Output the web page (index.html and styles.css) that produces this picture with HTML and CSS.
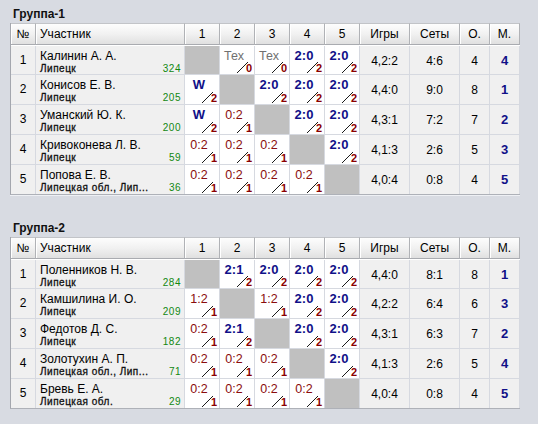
FILE: index.html
```html
<!DOCTYPE html>
<html lang="ru">
<head>
<meta charset="utf-8">
<title>Группы</title>
<link rel="stylesheet" href="styles.css">
</head>
<body>
<div class="page">
  <section class="group">
    <h2 class="title">Группа-1</h2>
    <div class="grid">
      <div class="row head">
        <div class="c n">№</div><div class="c name">Участник</div>
        <div class="c">1</div><div class="c">2</div><div class="c">3</div><div class="c">4</div><div class="c">5</div>
        <div class="c">Игры</div><div class="c">Сеты</div><div class="c">О.</div><div class="c">М.</div>
      </div>
      <div class="body">
        <div class="row">
          <div class="c n">1</div>
          <div class="c name"><div class="fio">Калинин А. А.</div><div class="sub"><span class="city">Липецк</span><span class="rt">324</span></div></div>
          <div class="c sc self"></div>
          <div class="c sc"><span class="res tex">Тех</span><i class="sl"></i><b class="pt">0</b></div>
          <div class="c sc"><span class="res tex">Тех</span><i class="sl"></i><b class="pt">0</b></div>
          <div class="c sc"><span class="res win">2:0</span><i class="sl"></i><b class="pt">2</b></div>
          <div class="c sc"><span class="res win">2:0</span><i class="sl"></i><b class="pt">2</b></div>
          <div class="c st">4,2:2</div><div class="c st">4:6</div><div class="c st">4</div><div class="c pl">4</div>
        </div>
        <div class="row">
          <div class="c n">2</div>
          <div class="c name"><div class="fio">Конисов Е. В.</div><div class="sub"><span class="city">Липецк</span><span class="rt">205</span></div></div>
          <div class="c sc"><span class="res win">W</span><i class="sl"></i><b class="pt">2</b></div>
          <div class="c sc self"></div>
          <div class="c sc"><span class="res win">2:0</span><i class="sl"></i><b class="pt">2</b></div>
          <div class="c sc"><span class="res win">2:0</span><i class="sl"></i><b class="pt">2</b></div>
          <div class="c sc"><span class="res win">2:0</span><i class="sl"></i><b class="pt">2</b></div>
          <div class="c st">4,4:0</div><div class="c st">9:0</div><div class="c st">8</div><div class="c pl">1</div>
        </div>
        <div class="row">
          <div class="c n">3</div>
          <div class="c name"><div class="fio">Уманский Ю. К.</div><div class="sub"><span class="city">Липецк</span><span class="rt">200</span></div></div>
          <div class="c sc"><span class="res win">W</span><i class="sl"></i><b class="pt">2</b></div>
          <div class="c sc"><span class="res loss">0:2</span><i class="sl"></i><b class="pt">1</b></div>
          <div class="c sc self"></div>
          <div class="c sc"><span class="res win">2:0</span><i class="sl"></i><b class="pt">2</b></div>
          <div class="c sc"><span class="res win">2:0</span><i class="sl"></i><b class="pt">2</b></div>
          <div class="c st">4,3:1</div><div class="c st">7:2</div><div class="c st">7</div><div class="c pl">2</div>
        </div>
        <div class="row">
          <div class="c n">4</div>
          <div class="c name"><div class="fio">Кривоконева Л. В.</div><div class="sub"><span class="city">Липецк</span><span class="rt">59</span></div></div>
          <div class="c sc"><span class="res loss">0:2</span><i class="sl"></i><b class="pt">1</b></div>
          <div class="c sc"><span class="res loss">0:2</span><i class="sl"></i><b class="pt">1</b></div>
          <div class="c sc"><span class="res loss">0:2</span><i class="sl"></i><b class="pt">1</b></div>
          <div class="c sc self"></div>
          <div class="c sc"><span class="res win">2:0</span><i class="sl"></i><b class="pt">2</b></div>
          <div class="c st">4,1:3</div><div class="c st">2:6</div><div class="c st">5</div><div class="c pl">3</div>
        </div>
        <div class="row">
          <div class="c n">5</div>
          <div class="c name"><div class="fio">Попова Е. В.</div><div class="sub"><span class="city">Липецкая обл., Лип...</span><span class="rt">36</span></div></div>
          <div class="c sc"><span class="res loss">0:2</span><i class="sl"></i><b class="pt">1</b></div>
          <div class="c sc"><span class="res loss">0:2</span><i class="sl"></i><b class="pt">1</b></div>
          <div class="c sc"><span class="res loss">0:2</span><i class="sl"></i><b class="pt">1</b></div>
          <div class="c sc"><span class="res loss">0:2</span><i class="sl"></i><b class="pt">1</b></div>
          <div class="c sc self"></div>
          <div class="c st">4,0:4</div><div class="c st">0:8</div><div class="c st">4</div><div class="c pl">5</div>
        </div>
      </div>
    </div>
  </section>

  <section class="group">
    <h2 class="title">Группа-2</h2>
    <div class="grid">
      <div class="row head">
        <div class="c n">№</div><div class="c name">Участник</div>
        <div class="c">1</div><div class="c">2</div><div class="c">3</div><div class="c">4</div><div class="c">5</div>
        <div class="c">Игры</div><div class="c">Сеты</div><div class="c">О.</div><div class="c">М.</div>
      </div>
      <div class="body">
        <div class="row">
          <div class="c n">1</div>
          <div class="c name"><div class="fio">Поленников Н. В.</div><div class="sub"><span class="city">Липецк</span><span class="rt">284</span></div></div>
          <div class="c sc self"></div>
          <div class="c sc"><span class="res win">2:1</span><i class="sl"></i><b class="pt">2</b></div>
          <div class="c sc"><span class="res win">2:0</span><i class="sl"></i><b class="pt">2</b></div>
          <div class="c sc"><span class="res win">2:0</span><i class="sl"></i><b class="pt">2</b></div>
          <div class="c sc"><span class="res win">2:0</span><i class="sl"></i><b class="pt">2</b></div>
          <div class="c st">4,4:0</div><div class="c st">8:1</div><div class="c st">8</div><div class="c pl">1</div>
        </div>
        <div class="row">
          <div class="c n">2</div>
          <div class="c name"><div class="fio">Камшилина И. О.</div><div class="sub"><span class="city">Липецк</span><span class="rt">209</span></div></div>
          <div class="c sc"><span class="res loss">1:2</span><i class="sl"></i><b class="pt">1</b></div>
          <div class="c sc self"></div>
          <div class="c sc"><span class="res loss">1:2</span><i class="sl"></i><b class="pt">1</b></div>
          <div class="c sc"><span class="res win">2:0</span><i class="sl"></i><b class="pt">2</b></div>
          <div class="c sc"><span class="res win">2:0</span><i class="sl"></i><b class="pt">2</b></div>
          <div class="c st">4,2:2</div><div class="c st">6:4</div><div class="c st">6</div><div class="c pl">3</div>
        </div>
        <div class="row">
          <div class="c n">3</div>
          <div class="c name"><div class="fio">Федотов Д. С.</div><div class="sub"><span class="city">Липецк</span><span class="rt">182</span></div></div>
          <div class="c sc"><span class="res loss">0:2</span><i class="sl"></i><b class="pt">1</b></div>
          <div class="c sc"><span class="res win">2:1</span><i class="sl"></i><b class="pt">2</b></div>
          <div class="c sc self"></div>
          <div class="c sc"><span class="res win">2:0</span><i class="sl"></i><b class="pt">2</b></div>
          <div class="c sc"><span class="res win">2:0</span><i class="sl"></i><b class="pt">2</b></div>
          <div class="c st">4,3:1</div><div class="c st">6:3</div><div class="c st">7</div><div class="c pl">2</div>
        </div>
        <div class="row">
          <div class="c n">4</div>
          <div class="c name"><div class="fio">Золотухин А. П.</div><div class="sub"><span class="city">Липецкая обл., Лип...</span><span class="rt">71</span></div></div>
          <div class="c sc"><span class="res loss">0:2</span><i class="sl"></i><b class="pt">1</b></div>
          <div class="c sc"><span class="res loss">0:2</span><i class="sl"></i><b class="pt">1</b></div>
          <div class="c sc"><span class="res loss">0:2</span><i class="sl"></i><b class="pt">1</b></div>
          <div class="c sc self"></div>
          <div class="c sc"><span class="res win">2:0</span><i class="sl"></i><b class="pt">2</b></div>
          <div class="c st">4,1:3</div><div class="c st">2:6</div><div class="c st">5</div><div class="c pl">4</div>
        </div>
        <div class="row">
          <div class="c n">5</div>
          <div class="c name"><div class="fio">Бревь Е. А.</div><div class="sub"><span class="city">Липецкая обл.</span><span class="rt">29</span></div></div>
          <div class="c sc"><span class="res loss">0:2</span><i class="sl"></i><b class="pt">1</b></div>
          <div class="c sc"><span class="res loss">0:2</span><i class="sl"></i><b class="pt">1</b></div>
          <div class="c sc"><span class="res loss">0:2</span><i class="sl"></i><b class="pt">1</b></div>
          <div class="c sc"><span class="res loss">0:2</span><i class="sl"></i><b class="pt">1</b></div>
          <div class="c sc self"></div>
          <div class="c st">4,0:4</div><div class="c st">0:8</div><div class="c st">4</div><div class="c pl">5</div>
        </div>
      </div>
    </div>
  </section>
</div>
</body>
</html>
```
FILE: styles.css
```css
html, body {
  margin: 0;
  background: #d8dbe2;
}
body {
  font-family: "Liberation Sans", Arial, sans-serif;
  font-size: 12px;
  color: #000;
}
.page {
  padding: 7px 0 0 10px;
}
.group + .group {
  margin-top: 26px;
}
.title {
  margin: 0 0 1px 3px;
  font-size: 12px;
  font-weight: bold;
  line-height: 15px;
  color: #111;
}
.grid {
  width: 510px;
  box-sizing: border-box;
  border-left: 1px solid #a4a7ae;
  border-bottom: 1px solid #aeb1b8;
  box-shadow: 0 1px 0 #eef0f4;
}
.row {
  display: grid;
  grid-template-columns: 25px 149px repeat(5, 35px) 50px 50px 30px 30px;
  height: 30px;
}
.c {
  box-sizing: border-box;
  border-right: 1px solid #d6d9e0;
  border-bottom: 1px solid #d6d9e0;
  background: #f0f0f0;
  overflow: hidden;
  white-space: nowrap;
}
.head {
  height: 22px;
}
.head .c {
  background: linear-gradient(#fdfdfd, #f1f1f1 50%, #e0e0e0);
  border-top: 1px solid #c2c4c8;
  border-bottom: 1px solid #a9abb0;
  border-right: 1px solid #b0b2b6;
  box-shadow: inset 1px 0 0 #ffffff;
  text-align: center;
  line-height: 20px;
}
.head .name {
  text-align: left;
  padding-left: 4px;
}
.body {
  border-top: 1px solid #ffffff;
}
.body .row:first-child {
  height: 29px;
}
.body .row:last-child .c {
  border-bottom: 0;
}
.body .row:last-child {
  height: 29px;
}
.n {
  text-align: center;
  line-height: 29px;
}
.name {
  padding: 0 3px 0 4px;
}
.fio {
  padding-top: 3px;
  line-height: 14px;
}
.sub {
  display: flex;
  justify-content: space-between;
  font-size: 10px;
  line-height: 12px;
}
.city {
  letter-spacing: 0.5px;
  color: #111;
  -webkit-text-stroke: 0.3px #111;
}
.rt {
  color: #118811;
  letter-spacing: 0.5px;
}
.sc {
  position: relative;
  background: #ffffff;
}
.sc.self {
  background: #c0c0c0;
}
.res {
  display: block;
  width: 28px;
  text-align: center;
  padding-top: 3px;
  line-height: 14px;
  font-size: 12.5px;
}
.win {
  color: #101088;
  font-weight: bold;
  font-size: 13px;
}
.loss {
  color: #8a0c0c;
}
.tex {
  color: #707070;
}
.sl {
  position: absolute;
  right: 6px;
  bottom: 1px;
  width: 11px;
  height: 11px;
  background: linear-gradient(to bottom right, transparent calc(50% - 0.6px), #1a1a1a 50%, transparent calc(50% + 0.6px));
}
.pt {
  position: absolute;
  right: 2px;
  bottom: 1px;
  font-size: 11px;
  line-height: 10px;
  font-weight: bold;
  color: #8a0000;
}
.st {
  text-align: center;
  padding-top: 2px;
  line-height: 26px;
}
.pl {
  text-align: center;
  padding-top: 2px;
  line-height: 26px;
  font-size: 13px;
  font-weight: bold;
  color: #101088;
}
```
